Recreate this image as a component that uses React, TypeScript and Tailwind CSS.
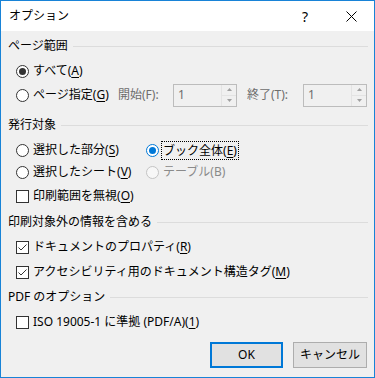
import React from 'react';

const font = { fontFamily: '"Noto Sans", "Noto Sans CJK JP", sans-serif' };

const Acc: React.FC<{ k: string }> = ({ k }) => (
  <>
    (<span className="underline underline-offset-2">{k}</span>)
  </>
);

const GroupHeader: React.FC<{ title: string; className?: string }> = ({ title, className }) => (
  <div className={`flex h-[20px] items-center ${className ?? ''}`}>
    <span className="whitespace-nowrap">{title}</span>
    <div className="ml-[5px] h-px flex-1 bg-[#dcdcdc]" />
  </div>
);

interface RadioProps {
  checked?: boolean;
  disabled?: boolean;
  focus?: boolean;
  children: React.ReactNode;
}

const Radio: React.FC<RadioProps> = ({ checked, disabled, focus, children }) => {
  const ring = disabled
    ? 'border-[#c4c4c4] bg-[#f7f7f7]'
    : checked && focus
      ? 'border-[#0078d7] bg-white'
      : 'border-[#333333] bg-white';
  const dot = focus ? 'bg-[#0078d7]' : 'bg-[#333333]';
  return (
    <div className="flex items-center">
      <div className={`flex h-[13px] w-[13px] shrink-0 items-center justify-center rounded-full border ${ring}`}>
        {checked && <div className={`h-[7px] w-[7px] rounded-full ${dot}`} />}
      </div>
      <span
        className={`whitespace-nowrap ${disabled ? 'text-[#8a8a8a]' : ''} ${
          focus ? 'ml-[2px] border border-dotted border-black px-[1px] leading-[17px]' : 'ml-[4px]'
        }`}
      >
        {children}
      </span>
    </div>
  );
};

const Check: React.FC<{ checked?: boolean; children: React.ReactNode }> = ({ checked, children }) => (
  <div className="flex items-center">
    <div className="flex h-[13px] w-[13px] shrink-0 items-center justify-center border border-[#333333] bg-white">
      {checked && (
        <svg width="11" height="11" viewBox="0 0 11 11">
          <path d="M1.5 5.5 L4 8 L9.5 2.5" fill="none" stroke="#333333" strokeWidth="1" />
        </svg>
      )}
    </div>
    <span className="ml-[4px] whitespace-nowrap">{children}</span>
  </div>
);

const SpinBox: React.FC = () => (
  <div className="flex h-[23px] w-[64px] border border-[#bcbcbc] bg-[#f0f0f0]">
    <div className="flex flex-1 items-center pl-[4px] text-[#6d6d6d]">1</div>
    <div className="flex w-[15px] flex-col border-l border-[#e3e3e3]">
      <div className="flex flex-1 items-center justify-center border-b border-[#e3e3e3]">
        <svg width="5" height="3" viewBox="0 0 5 3">
          <path d="M0 3 L2.5 0 L5 3 Z" fill="#a0a0a0" />
        </svg>
      </div>
      <div className="flex flex-1 items-center justify-center">
        <svg width="5" height="3" viewBox="0 0 5 3">
          <path d="M0 0 L2.5 3 L5 0 Z" fill="#a0a0a0" />
        </svg>
      </div>
    </div>
  </div>
);

export default function App() {
  return (
    <div
      className="flex h-[378px] w-[375px] flex-col border border-[#1883d7] bg-[#f0f0f0] text-[12px] text-black"
      style={font}
    >
      {/* title bar */}
      <div className="flex h-[30px] shrink-0 items-center bg-white">
        <span className="pl-[8px]">オプション</span>
        <div className="flex-1" />
        <div className="flex h-full w-[46px] items-center justify-center text-[14px]">?</div>
        <div className="flex h-full w-[46px] items-center justify-center">
          <svg width="11" height="11" viewBox="0 0 11 11">
            <path d="M0.5 0.5 L10.5 10.5 M10.5 0.5 L0.5 10.5" stroke="#000" strokeWidth="1" />
          </svg>
        </div>
      </div>

      <div className="flex flex-1 flex-col pl-[7px] pr-[6px] pt-[5px]">
        <GroupHeader title="ページ範囲" />
        <div className="ml-[8px] mt-[3px] flex h-[24px] items-center">
          <Radio checked>
            すべて<Acc k="A" />
          </Radio>
        </div>
        <div className="ml-[8px] flex h-[24px] items-center">
          <div className="w-[102px]">
            <Radio>
              ページ指定<Acc k="G" />
            </Radio>
          </div>
          <span className="w-[55px] text-[#6d6d6d]">開始(F):</span>
          <SpinBox />
          <span className="ml-[10px] w-[56px] text-[#6d6d6d]">終了(T):</span>
          <SpinBox />
        </div>

        <GroupHeader title="発行対象" className="mt-[8px]" />
        <div className="ml-[8px] mt-[4px] flex h-[22px] items-center">
          <div className="w-[130px]">
            <Radio>
              選択した部分<Acc k="S" />
            </Radio>
          </div>
          <Radio checked focus>
            ブック全体<Acc k="E" />
          </Radio>
        </div>
        <div className="ml-[8px] flex h-[22px] items-center">
          <div className="w-[130px]">
            <Radio>
              選択したシート<Acc k="V" />
            </Radio>
          </div>
          <Radio disabled>テーブル(B)</Radio>
        </div>
        <div className="ml-[8px] mt-[2px] flex h-[22px] items-center">
          <Check>
            印刷範囲を無視<Acc k="O" />
          </Check>
        </div>

        <GroupHeader title="印刷対象外の情報を含める" className="mt-[5px]" />
        <div className="ml-[8px] mt-[4px] flex h-[22px] items-center">
          <Check checked>
            ドキュメントのプロパティ<Acc k="R" />
          </Check>
        </div>
        <div className="ml-[8px] mt-[3px] flex h-[22px] items-center">
          <Check checked>
            アクセシビリティ用のドキュメント構造タグ<Acc k="M" />
          </Check>
        </div>

        <GroupHeader title="PDF のオプション" className="mt-[4px]" />
        <div className="ml-[8px] mt-[4px] flex h-[22px] items-center">
          <Check>
            ISO 19005-1 に準拠 (PDF/A)<Acc k="1" />
          </Check>
        </div>

        <div className="mt-[9px] flex justify-end gap-[10px] pr-[1px]">
          <button className="h-[26px] w-[73px] border-2 border-[#0078d7] bg-[#e1e1e1]">OK</button>
          <button className="h-[26px] w-[74px] border border-[#adadad] bg-[#e1e1e1]">キャンセル</button>
        </div>
      </div>
    </div>
  );
}
